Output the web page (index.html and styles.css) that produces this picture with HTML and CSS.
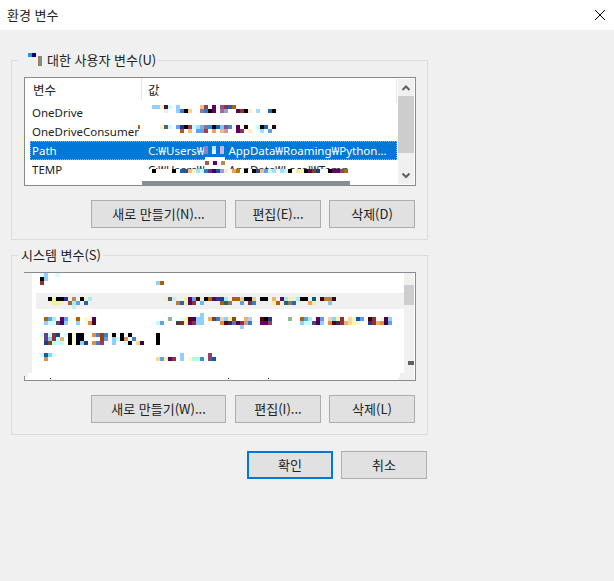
FILE: index.html
```html
<!DOCTYPE html>
<html lang="ko">
<head>
<meta charset="utf-8">
<title>환경 변수</title>
<link rel="stylesheet" href="styles.css">
</head>
<body>
<div class="dialog">
  <header class="titlebar">
    <span class="title">환경 변수</span>
    <svg class="close" viewBox="0 0 10 10"><path d="M0 0L10 10M10 0L0 10"/></svg>
  </header>
  <main class="content">
    <fieldset class="group">
      <legend class="legend"><svg class="legend-mask" viewBox="21 53 26 14"><rect x="28" y="53" fill="#3090e0"/><rect x="32" y="53" fill="#000090"/><path fill="#b08040" d="M38 56h2v10h-2z"/><path fill="#7090a0" d="M40 56h2v10h-2z"/></svg>대한 사용자 변수(U)</legend>
      <div class="list">
        <div class="table">
          <div class="row head"><span class="name">변수</span><span class="value">값</span></div>
          <div class="row"><span class="name">OneDrive</span><span class="value"></span></div>
          <div class="row"><span class="name">OneDriveConsumer</span><span class="value"></span></div>
          <div class="row selected"><span class="name">Path</span><span class="value">C:₩Users₩<span class="gap"></span>AppData₩Roaming₩Python...</span></div>
          <div class="row"><span class="name">TEMP</span><span class="value">C:₩Users₩<span class="gap"></span>AppData₩Local₩Temp</span></div>
        </div>
        <div class="scrollbar">
          <svg class="arrow" viewBox="0 0 16 17"><path d="M4.500 11L8 7.500L11.500 11"/></svg>
          <div class="thumb"></div>
          <svg class="arrow" viewBox="0 0 16 17"><path d="M4.500 6.500L8 10L11.500 6.500"/></svg>
        </div>
        <svg class="mosaic" viewBox="24 77 392 109">
          <path fill="#e5e5e5" d="M141 78h1v22h-1zM396 79h1v24h-1z"/>
          <path fill="#a07000" d="M138 125h2v4h-2z"/>
          <path fill="#fff" d="M146 169h220v12H146z"/>
          <path fill="#8a8d94" d="M142 181h208v4H142z"/>
          <path fill="#fff" d="M205 157h20v8h-20z"/>
          <rect x="152" y="105" fill="#8fd0ff"/><rect x="156" y="105" fill="#8fd0ff"/><rect x="160" y="105" fill="#fff2b0"/><rect x="164" y="105" fill="#3c1053"/><rect x="168" y="105" fill="#c8ffff"/><rect x="176" y="105" fill="#8fd0ff"/><rect x="200" y="105" fill="#f0c080"/><rect x="204" y="105" fill="#904060"/><rect x="212" y="105" fill="#600060"/><rect x="220" y="105" fill="#905090"/><rect x="224" y="105" fill="#903050"/><rect x="228" y="105" fill="#2060b0"/><rect x="232" y="105" fill="#b06000"/>
          <rect x="164" y="109" fill="#e0f5e0"/><rect x="176" y="109" fill="#8fd0ff"/><rect x="180" y="109" fill="#3a80d0"/><rect x="184" y="109" fill="#000"/><rect x="188" y="109" fill="#f5d090"/><rect x="200" y="109" fill="#9870a0"/><rect x="204" y="109" fill="#3080c0"/><rect x="208" y="109" fill="#000"/><rect x="212" y="109" fill="#600060"/><rect x="220" y="109" fill="#987090"/><rect x="224" y="109" fill="#a0a0d0"/><rect x="236" y="109" fill="#4a0a5a"/><rect x="240" y="109" fill="#903040"/><rect x="244" y="109" fill="#000"/><rect x="248" y="109" fill="#fff0c0"/><rect x="256" y="109" fill="#a0e0ff"/><rect x="268" y="109" fill="#3060b0"/><rect x="272" y="109" fill="#000"/>
          <rect x="160" y="125" fill="#fff2c0"/><rect x="164" y="125" fill="#606060"/><rect x="168" y="125" fill="#c0ffff"/><rect x="176" y="125" fill="#60a0f0"/><rect x="180" y="125" fill="#303090"/><rect x="184" y="125" fill="#000"/><rect x="188" y="125" fill="#a04040"/><rect x="192" y="125" fill="#c0ffff"/><rect x="196" y="125" fill="#a0e0ff"/><rect x="200" y="125" fill="#70b0f0"/><rect x="204" y="125" fill="#907090"/><rect x="208" y="125" fill="#3090e0"/><rect x="212" y="125" fill="#000"/><rect x="216" y="125" fill="#2060b0"/><rect x="220" y="125" fill="#90c0e0"/><rect x="224" y="125" fill="#805090"/><rect x="228" y="125" fill="#4090d0"/><rect x="236" y="125" fill="#500050"/><rect x="244" y="125" fill="#200"/><rect x="256" y="125" fill="#c0ffff"/><rect x="260" y="125" fill="#000"/><rect x="264" y="125" fill="#2060b0"/><rect x="272" y="125" fill="#300"/>
          <rect x="180" y="129" fill="#b06000"/><rect x="188" y="129" fill="#f0c080"/><rect x="196" y="129" fill="#60a0f0"/><rect x="200" y="129" fill="#60a0f0"/><rect x="204" y="129" fill="#a04040"/><rect x="212" y="129" fill="#f0a060"/><rect x="220" y="129" fill="#e0c080"/><rect x="224" y="129" fill="#e090a0"/><rect x="236" y="129" fill="#600060"/><rect x="240" y="129" fill="#903060"/><rect x="248" y="129" fill="#fff0b0"/><rect x="260" y="129" fill="#a0e0ff"/><rect x="268" y="129" fill="#60a0e0"/>
          <rect x="204" y="146" fill="#9080c0"/><rect x="204" y="150" fill="#9080c0"/><rect x="212" y="146" fill="#b0e8ff"/><rect x="212" y="150" fill="#d8f4ff"/><rect x="220" y="146" fill="#d0b0e0"/><rect x="220" y="150" fill="#d0b0e0"/>
          <rect x="205" y="161" fill="#a06040"/><rect x="213" y="161" fill="#600060"/><rect x="221" y="161" fill="#b09040"/>
          <rect x="152" y="169" fill="#000"/><rect x="172" y="169" fill="#000"/><rect x="180" y="169" fill="#2060b0"/><rect x="184" y="169" fill="#305090"/><rect x="188" y="169" fill="#f0c080"/><rect x="192" y="169" fill="#fff0c0"/><rect x="196" y="169" fill="#a0e0ff"/><rect x="200" y="169" fill="#c0ffff"/><rect x="204" y="169" fill="#3080c0"/><rect x="208" y="169" fill="#603090"/><rect x="212" y="169" fill="#400060"/><rect x="216" y="169" fill="#2050a0"/><rect x="220" y="169" fill="#90a0e0"/><rect x="224" y="169" fill="#f0f0c0"/><rect x="232" y="169" fill="#f0a050"/><rect x="236" y="169" fill="#b08000"/><rect x="244" y="169" fill="#000"/><rect x="252" y="169" fill="#000"/><rect x="256" y="169" fill="#305090"/><rect x="260" y="169" fill="#f0c080"/><rect x="264" y="169" fill="#60a0f0"/><rect x="268" y="169" fill="#c0ffff"/><rect x="272" y="169" fill="#a0e0ff"/><rect x="276" y="169" fill="#fff"/><rect x="280" y="169" fill="#a0e0ff"/><rect x="284" y="169" fill="#c0ffff"/><rect x="288" y="169" fill="#000"/><rect x="296" y="169" fill="#f0f0a0"/><rect x="300" y="169" fill="#fff0c0"/><rect x="304" y="169" fill="#000"/><rect x="308" y="169" fill="#600060"/><rect x="312" y="169" fill="#8a4000"/><rect x="316" y="169" fill="#104080"/><rect x="328" y="169" fill="#000"/><rect x="332" y="169" fill="#600060"/><rect x="336" y="169" fill="#600060"/><rect x="340" y="169" fill="#904070"/><rect x="344" y="169" fill="#a07000"/>
        </svg>
      </div>
      <div class="actions">
        <button class="btn wide" type="button">새로 만들기(N)...</button>
        <button class="btn" type="button">편집(E)...</button>
        <button class="btn" type="button">삭제(D)</button>
      </div>
    </fieldset>

    <fieldset class="group second">
      <legend class="legend">시스템 변수(S)</legend>
      <div class="list system">
        <div class="gutter"></div>
        <div class="table plain"><div class="stripe"></div></div>
        <div class="scrollbar slim"><div class="thumb"></div></div>
        <svg class="mosaic" viewBox="24 272 392 109">
          <path fill="#fff" d="M28 373h4v4h-4zM25 377h7v3h-7z"/>
          <path fill="#868a91" d="M24 376h1v4h-1z"/>
          <path fill="#f0f0f0" d="M400 373h4v4h-4zM398 377h6v3h-6z"/>
          <path fill="#606060" d="M408 361h6v4h-6z"/>
          <path fill="#600060" d="M50 378h1v1h-1zM228 378h1v1h-1zM268 378h1v1h-1z"/>
          <path fill="#000" d="M156 333h4v12h-4z"/>
          <rect x="40" y="273" fill="#e0ffff"/><rect x="44" y="273" fill="#8fd0ff"/><rect x="56" y="273" fill="#d0ffff"/><rect x="40" y="277" fill="#000"/><rect x="44" y="277" fill="#8fd0ff"/><rect x="40" y="281" fill="#903030"/><rect x="156" y="281" fill="#8fd0ff"/><rect x="160" y="281" fill="#b06000"/>
          <rect x="48" y="297" fill="#000"/><rect x="52" y="297" fill="#f0f0a0"/><rect x="56" y="297" fill="#000"/><rect x="60" y="297" fill="#000"/><rect x="64" y="297" fill="#303090"/><rect x="72" y="297" fill="#b09040"/><rect x="80" y="297" fill="#000"/><rect x="84" y="297" fill="#f5f0c0"/><rect x="88" y="297" fill="#a0f0f0"/>
          <rect x="52" y="301" fill="#f0f0a0"/><rect x="56" y="301" fill="#f0f0a0"/><rect x="60" y="301" fill="#f5f0c0"/><rect x="68" y="301" fill="#b06030"/><rect x="72" y="301" fill="#a0f0f0"/><rect x="76" y="301" fill="#60a0f0"/><rect x="84" y="301" fill="#3060b0"/><rect x="72" y="305" fill="#c0f0f0"/>
          <rect x="164" y="297" fill="#f0f0d0"/><rect x="168" y="297" fill="#606060"/><rect x="172" y="297" fill="#c0f0f0"/><rect x="184" y="297" fill="#f0f0a0"/><rect x="188" y="297" fill="#600060"/><rect x="192" y="297" fill="#60a0f0"/><rect x="196" y="297" fill="#400010"/><rect x="200" y="297" fill="#f0f0d0"/><rect x="204" y="297" fill="#000"/><rect x="208" y="297" fill="#b06000"/><rect x="212" y="297" fill="#600060"/><rect x="216" y="297" fill="#303090"/><rect x="220" y="297" fill="#104090"/><rect x="224" y="297" fill="#a0f0f0"/><rect x="232" y="297" fill="#b06000"/><rect x="236" y="297" fill="#b06000"/><rect x="240" y="297" fill="#f0d080"/><rect x="244" y="297" fill="#000"/><rect x="248" y="297" fill="#000"/><rect x="252" y="297" fill="#f0d080"/><rect x="260" y="297" fill="#000"/><rect x="264" y="297" fill="#000"/><rect x="272" y="297" fill="#f0b070"/><rect x="280" y="297" fill="#600060"/><rect x="284" y="297" fill="#a0f0f0"/><rect x="288" y="297" fill="#f0f0c0"/><rect x="292" y="297" fill="#f0f0c0"/><rect x="296" y="297" fill="#a0f0f0"/><rect x="300" y="297" fill="#000"/><rect x="304" y="297" fill="#000"/><rect x="312" y="297" fill="#006080"/><rect x="320" y="297" fill="#400010"/><rect x="324" y="297" fill="#c08030"/><rect x="328" y="297" fill="#c08030"/><rect x="332" y="297" fill="#400010"/>
          <rect x="176" y="301" fill="#b08030"/><rect x="180" y="301" fill="#3060b0"/><rect x="184" y="301" fill="#f0f0a0"/><rect x="188" y="301" fill="#600060"/><rect x="192" y="301" fill="#903040"/><rect x="200" y="301" fill="#60c0f0"/><rect x="220" y="301" fill="#b06000"/><rect x="224" y="301" fill="#306060"/><rect x="228" y="301" fill="#808060"/><rect x="240" y="301" fill="#60a0f0"/><rect x="248" y="301" fill="#903040"/><rect x="252" y="301" fill="#3080d0"/><rect x="272" y="301" fill="#f0f0a0"/><rect x="276" y="301" fill="#b06000"/><rect x="284" y="301" fill="#306060"/><rect x="288" y="301" fill="#808060"/><rect x="292" y="301" fill="#3060b0"/><rect x="308" y="301" fill="#f0a060"/><rect x="312" y="301" fill="#f0f0a0"/><rect x="328" y="301" fill="#80c8f0"/>
          <rect x="44" y="317" fill="#b06000"/><rect x="48" y="317" fill="#60a0f0"/><rect x="52" y="317" fill="#a0f0f0"/><rect x="60" y="317" fill="#600060"/><rect x="64" y="317" fill="#60a0f0"/><rect x="76" y="317" fill="#b06000"/><rect x="84" y="317" fill="#fff8d0"/><rect x="88" y="317" fill="#fff8d0"/><rect x="92" y="317" fill="#500050"/>
          <rect x="44" y="321" fill="#8fd0ff"/><rect x="48" y="321" fill="#d0ffff"/><rect x="52" y="321" fill="#d0ffff"/><rect x="56" y="321" fill="#604070"/><rect x="60" y="321" fill="#400060"/><rect x="64" y="321" fill="#8fd0ff"/><rect x="76" y="321" fill="#8fd0ff"/><rect x="88" y="321" fill="#e09030"/><rect x="92" y="321" fill="#400030"/>
          <rect x="200" y="313" fill="#8fd0ff"/><rect x="168" y="317" fill="#90b890"/><rect x="180" y="317" fill="#e0ffff"/><rect x="184" y="317" fill="#f5f5b0"/><rect x="188" y="317" fill="#600000"/><rect x="192" y="317" fill="#400060"/><rect x="196" y="317" fill="#8fd0ff"/><rect x="200" y="317" fill="#8fd0ff"/><rect x="208" y="317" fill="#f0b060"/><rect x="212" y="317" fill="#804030"/><rect x="216" y="317" fill="#3080d0"/><rect x="220" y="317" fill="#f5d0b0"/><rect x="224" y="317" fill="#8fd0ff"/><rect x="228" y="317" fill="#f5f5b0"/><rect x="232" y="317" fill="#a04000"/><rect x="244" y="317" fill="#f0b060"/><rect x="248" y="317" fill="#b0d0f0"/><rect x="260" y="317" fill="#600000"/><rect x="264" y="317" fill="#000"/><rect x="268" y="317" fill="#303080"/><rect x="288" y="317" fill="#90b890"/><rect x="300" y="317" fill="#b06000"/><rect x="304" y="317" fill="#60a0f0"/><rect x="308" y="317" fill="#a0f0f0"/><rect x="316" y="317" fill="#600060"/><rect x="320" y="317" fill="#60a0f0"/><rect x="328" y="317" fill="#f5d0b0"/><rect x="332" y="317" fill="#8fd0ff"/><rect x="336" y="317" fill="#f5f5b0"/><rect x="340" y="317" fill="#903030"/><rect x="348" y="317" fill="#ffd890"/><rect x="352" y="317" fill="#fff0c0"/><rect x="356" y="317" fill="#0060b0"/><rect x="360" y="317" fill="#60a0f0"/><rect x="368" y="317" fill="#400000"/><rect x="372" y="317" fill="#903030"/><rect x="380" y="317" fill="#fff8d0"/><rect x="384" y="317" fill="#500050"/><rect x="388" y="317" fill="#8fd0ff"/>
          <rect x="156" y="321" fill="#c0ffff"/><rect x="160" y="321" fill="#60a0f0"/><rect x="176" y="321" fill="#404040"/><rect x="180" y="321" fill="#803030"/><rect x="184" y="321" fill="#f5f5b0"/><rect x="188" y="321" fill="#600060"/><rect x="192" y="321" fill="#903040"/><rect x="196" y="321" fill="#8fd0ff"/><rect x="200" y="321" fill="#8fd0ff"/><rect x="220" y="321" fill="#e09040"/><rect x="224" y="321" fill="#600000"/><rect x="228" y="321" fill="#303060"/><rect x="232" y="321" fill="#6070c0"/><rect x="236" y="321" fill="#500050"/><rect x="240" y="321" fill="#903040"/><rect x="244" y="321" fill="#e09090"/><rect x="248" y="321" fill="#3080d0"/><rect x="260" y="321" fill="#700060"/><rect x="264" y="321" fill="#700060"/><rect x="268" y="321" fill="#904070"/><rect x="300" y="321" fill="#8fd0ff"/><rect x="304" y="321" fill="#c0ffff"/><rect x="308" y="321" fill="#c0ffff"/><rect x="312" y="321" fill="#604070"/><rect x="316" y="321" fill="#400060"/><rect x="320" y="321" fill="#8fd0ff"/><rect x="328" y="321" fill="#e09040"/><rect x="332" y="321" fill="#600000"/><rect x="336" y="321" fill="#303060"/><rect x="340" y="321" fill="#903040"/><rect x="344" y="321" fill="#f0b060"/><rect x="348" y="321" fill="#ffd890"/><rect x="352" y="321" fill="#ffffb0"/><rect x="356" y="321" fill="#ffffb0"/><rect x="368" y="321" fill="#303090"/><rect x="372" y="321" fill="#903030"/><rect x="376" y="321" fill="#f0b060"/><rect x="380" y="321" fill="#e09040"/><rect x="384" y="321" fill="#400040"/><rect x="388" y="321" fill="#60a0f0"/><rect x="240" y="325" fill="#8fd0ff"/>
          <rect x="40" y="333" fill="#d0ffff"/><rect x="44" y="333" fill="#604090"/><rect x="48" y="333" fill="#c0ffff"/><rect x="52" y="333" fill="#903030"/><rect x="56" y="333" fill="#104090"/><rect x="64" y="333" fill="#d0ffff"/><rect x="68" y="333" fill="#000"/><rect x="72" y="333" fill="#fff8d0"/><rect x="76" y="333" fill="#000"/><rect x="80" y="333" fill="#000"/><rect x="92" y="333" fill="#e09040"/><rect x="96" y="333" fill="#4080d0"/><rect x="100" y="333" fill="#a04000"/><rect x="104" y="333" fill="#4080d0"/><rect x="112" y="333" fill="#000"/><rect x="120" y="333" fill="#000"/><rect x="128" y="333" fill="#000"/>
          <rect x="40" y="337" fill="#ffffc0"/><rect x="44" y="337" fill="#604090"/><rect x="48" y="337" fill="#8fd0ff"/><rect x="52" y="337" fill="#903030"/><rect x="56" y="337" fill="#c0ffff"/><rect x="60" y="337" fill="#f0b060"/><rect x="68" y="337" fill="#000"/><rect x="72" y="337" fill="#fff8d0"/><rect x="76" y="337" fill="#000030"/><rect x="80" y="337" fill="#000"/><rect x="100" y="337" fill="#a04000"/><rect x="104" y="337" fill="#60a0f0"/><rect x="112" y="337" fill="#8fd0ff"/><rect x="116" y="337" fill="#c0ffff"/><rect x="120" y="337" fill="#000"/><rect x="124" y="337" fill="#e09040"/><rect x="132" y="337" fill="#4080d0"/>
          <rect x="44" y="341" fill="#104090"/><rect x="48" y="341" fill="#904000"/><rect x="52" y="341" fill="#c0ffff"/><rect x="56" y="341" fill="#c0ffff"/><rect x="60" y="341" fill="#c0ffff"/><rect x="68" y="341" fill="#000"/><rect x="72" y="341" fill="#fff8d0"/><rect x="76" y="341" fill="#000"/><rect x="80" y="341" fill="#8fd0ff"/><rect x="84" y="341" fill="#104090"/><rect x="92" y="341" fill="#e09040"/><rect x="96" y="341" fill="#4080d0"/><rect x="100" y="341" fill="#904070"/><rect x="112" y="341" fill="#8fd0ff"/><rect x="124" y="341" fill="#d0ffff"/><rect x="128" y="341" fill="#000"/><rect x="136" y="341" fill="#ffd890"/><rect x="140" y="341" fill="#400040"/>
          <rect x="40" y="353" fill="#d0ffff"/><rect x="44" y="353" fill="#0060b0"/><rect x="48" y="353" fill="#8fd0ff"/><rect x="52" y="353" fill="#d0ffff"/><rect x="44" y="357" fill="#e09040"/>
          <rect x="180" y="353" fill="#8fd0ff"/><rect x="208" y="353" fill="#904070"/>
          <rect x="156" y="357" fill="#ffd890"/><rect x="160" y="357" fill="#60a0f0"/><rect x="164" y="357" fill="#fff0b0"/><rect x="168" y="357" fill="#600060"/><rect x="172" y="357" fill="#903040"/><rect x="180" y="357" fill="#8fd0ff"/><rect x="188" y="357" fill="#fff8d0"/><rect x="192" y="357" fill="#b0ffe0"/><rect x="196" y="357" fill="#b0ffe0"/><rect x="200" y="357" fill="#4090d0"/><rect x="208" y="357" fill="#904070"/><rect x="212" y="357" fill="#0060b0"/>
        </svg>
      </div>
      <div class="actions">
        <button class="btn wide" type="button">새로 만들기(W)...</button>
        <button class="btn" type="button">편집(I)...</button>
        <button class="btn" type="button">삭제(L)</button>
      </div>
    </fieldset>

    <div class="footer">
      <button class="btn primary" type="button">확인</button>
      <button class="btn" type="button">취소</button>
    </div>
  </main>
</div>
</body>
</html>
```
FILE: styles.css
```css
* { box-sizing: border-box; }
html, body { margin: 0; padding: 0; }
body {
  width: 614px;
  height: 581px;
  overflow: hidden;
  background: #f0f0f0;
  color: #000;
  font: 11.5px/14px "Noto Sans", "Noto Sans CJK KR", sans-serif;
}
.titlebar {
  height: 30px;
  background: #fff;
  display: flex;
  align-items: center;
  justify-content: space-between;
  padding: 0 9px 0 7px;
}
.title { font-size: 13px; font-family: "Noto Sans CJK KR", sans-serif; color: #222; }
.close { width: 10px; height: 10px; fill: none; stroke: #000; stroke-width: 1; }
.content { width: 417px; margin-left: 11px; padding-top: 23px; }
.group {
  margin: 0;
  min-width: 0;
  border: 1px solid #dcdcdc;
  padding: 10px 11px 11px 12px;
}
.second { margin-top: 8px; }
.legend {
  margin-left: -6px;
  padding: 0 2px 0 3px;
  font: 13px/14px "Noto Sans CJK KR", "Noto Sans", sans-serif;
  color: #222;
}
.legend-mask { display: inline-block; width: 26px; height: 14px; vertical-align: top; }
.legend-mask rect { width: 4px; height: 4px; }
.list {
  position: relative;
  height: 109px;
  display: flex;
  background: #fff;
  border: 1px solid #868a91;
  overflow: hidden;
}
.table { flex: 1; min-width: 0; }
.row {
  height: 19px;
  margin: 0 1px 0 5px;
  padding-left: 2px;
  display: grid;
  grid-template-columns: 116px 1fr;
  align-items: center;
  white-space: nowrap;
  overflow: hidden;
  color: #222;
}
.row.head {
  height: 25px;
  padding-left: 3px;
  padding-bottom: 1px;
  grid-template-columns: 115px 1fr;
  font: 12.5px/14px "Noto Sans CJK KR", sans-serif;
}
.selected {
  background: #0078d7;
  color: #fff;
  outline: 1px dotted #f0a030;
  outline-offset: -1px;
}
.gap { display: inline-block; width: 24px; }
.scrollbar {
  width: 16px;
  margin: 1px 1px 1px 0;
  background: #f0f0f0;
  display: flex;
  flex-direction: column;
}
.arrow { width: 16px; height: 17px; fill: none; stroke: #606060; stroke-width: 2; }
.thumb { height: 57px; background: #cdcdcd; }
.scrollbar .arrow:last-child { margin-top: auto; }
.mosaic { position: absolute; left: -1px; top: -1px; width: 392px; height: 109px; }
.mosaic rect { width: 4px; height: 4px; }
.system { border-left: 0; }
.gutter { width: 8px; background: #f0f0f0; }
.plain { padding: 20px 0 0 4px; }
.stripe { height: 16px; background: #f0f0f0; }
.slim { width: 10px; margin: 0 1px 0 0; padding-top: 12px; }
.slim .thumb { height: 20px; }
.system .mosaic { left: 0; }
.actions {
  display: flex;
  justify-content: flex-end;
  gap: 8px;
  margin-top: 14px;
  padding-right: 1px;
}
.btn {
  width: 86px;
  height: 28px;
  padding: 0;
  background: #e1e1e1;
  border: 1px solid #adadad;
  border-radius: 0;
  font: 13px/14px "Noto Sans CJK KR", "Noto Sans", sans-serif;
  color: #222;
}
.btn.wide { width: 135px; margin-right: 1px; }
.primary { border: 2px solid #0078d7; }
.footer {
  display: flex;
  justify-content: flex-end;
  gap: 8px;
  padding-top: 16px;
  padding-right: 1px;
}
```
